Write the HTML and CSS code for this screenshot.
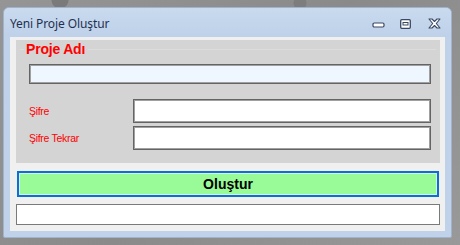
FILE: index.html
```html
<!DOCTYPE html>
<html lang="tr">
<head>
<meta charset="utf-8">
<title>Yeni Proje Oluştur</title>
<link rel="stylesheet" href="styles.css">
</head>
<body>
<div class="desktop">
  <div class="window">
    <div class="titlebar">
      <span class="title">Yeni Proje Oluştur</span>
      <div class="controls">
        <svg class="ctl ctl-min" width="13" height="6" viewBox="0 0 13 6"><rect x="1" y="1" width="11" height="4" rx="1.2" fill="#fff" stroke="#3b4863" stroke-width="1.2"/></svg>
        <svg class="ctl ctl-max" width="11" height="10" viewBox="0 0 11 10"><rect x="0.7" y="0.7" width="9.6" height="8.6" rx="1" fill="#fff" stroke="#3b4863" stroke-width="1.3"/><rect x="3" y="3.5" width="5" height="2.5" fill="none" stroke="#3b4863" stroke-width="1"/></svg>
        <svg class="ctl ctl-close" width="13" height="11" viewBox="0 0 13 11"><path d="M1 1 L4 1 L6.5 3.5 L9 1 L12 1 L8.3 5.5 L12 10 L9 10 L6.5 7.5 L4 10 L1 10 L4.7 5.5 Z" fill="#fff" stroke="#3b4863" stroke-width="1.1" stroke-linejoin="round"/></svg>
      </div>
    </div>
    <div class="client">
      <div class="group">
        <div class="legend-row"><span class="legend">Proje Adı</span></div>
        <input class="field field-name" type="text">
        <div class="pw-grid">
          <label class="lbl">Şifre</label>
          <input class="field" type="password">
          <label class="lbl">Şifre Tekrar</label>
          <input class="field" type="password">
        </div>
      </div>
      <button class="create">Oluştur</button>
      <input class="status" type="text">
    </div>
  </div>
</div>
</body>
</html>
```
FILE: styles.css
```css
html, body {
  margin: 0;
  padding: 0;
}
body {
  width: 460px;
  height: 245px;
  overflow: hidden;
  background: #8f8f8f;
}
.desktop {
  width: 460px;
  height: 245px;
  padding: 7px 0 0 3px;
  box-sizing: border-box;
  background:
    radial-gradient(circle at 60px 0px, #7a7a7a 0 8px, transparent 9px),
    radial-gradient(circle at 300px 3px, #7d7d7d 0 6px, transparent 7px),
    linear-gradient(135deg, #959595, #8a8a8a 50%, #999 100%);
}
.window {
  width: 449px;
  height: 231px;
  box-sizing: border-box;
  border: 1px solid #9fb3cc;
  border-radius: 6px 6px 2px 2px;
  background: #bfd2ea;
  display: flex;
  flex-direction: column;
  padding: 0 6px 6px 6px;
}
.titlebar {
  height: 29px;
  display: flex;
  align-items: center;
  justify-content: space-between;
  background: linear-gradient(#c9daee, #bed1e9);
  margin: 0 -6px;
  padding: 0 10px 0 6px;
  border-radius: 5px 5px 0 0;
}
.title {
  font-family: "Noto Sans", "Open Sans", sans-serif;
  font-size: 12px;
  color: #1f3152;
  margin-top: 1px;
  letter-spacing: -0.1px;
}
.controls {
  display: flex;
  align-items: center;
  gap: 0;
  margin-top: 2px;
}
.ctl { display: block; }
.ctl-min { margin-right: 15px; margin-top: 3px; }
.ctl-max { margin-right: 17px; }
.client {
  flex: 1;
  background: #f0f0f0;
  display: flex;
  flex-direction: column;
  padding: 3px 5px 6px 6px;
}
.group {
  height: 123px;
  box-sizing: border-box;
  background: #d4d4d4;
  padding: 0 9px 0 13px;
  display: flex;
  flex-direction: column;
  position: relative;
}
.group::before {
  content: "";
  position: absolute;
  left: 4px;
  right: 4px;
  top: 9px;
  height: 1px;
  background: #dcdcdc;
}
.legend-row {
  height: 24px;
  position: relative;
}
.legend {
  position: absolute;
  left: -5px;
  top: 1px;
  padding: 0 3px 0 2px;
  background: #d4d4d4;
  font-family: "Liberation Sans", Arial, sans-serif;
  font-weight: bold;
  font-size: 14px;
  line-height: 16px;
  color: #ff0000;
  letter-spacing: -0.2px;
}
.field {
  display: block;
  box-sizing: border-box;
  margin: 0;
  height: 24px;
  border: 1px solid #646464;
  box-shadow: inset 0 0 0 1px #a0a0a0;
  background: #fff;
  outline: none;
  padding: 0;
  width: 100%;
}
.field-name {
  height: 20px;
  background: #eef6ff;
}
.pw-grid {
  margin-top: 15px;
  display: grid;
  grid-template-columns: 104px 1fr;
  row-gap: 3px;
  align-items: center;
}
.lbl {
  font-family: "Liberation Sans", Arial, sans-serif;
  font-size: 10.5px;
  color: #ff0000;
  letter-spacing: -0.3px;
  padding-bottom: 1px;
}
.create {
  margin: 8px 1px 0 1px;
  height: 26px;
  box-sizing: border-box;
  border: 2px solid #0a6fd6;
  box-shadow: inset 0 0 0 1px #d8f0d8;
  background: #98fb98;
  font-family: "Liberation Sans", Arial, sans-serif;
  font-weight: bold;
  font-size: 14px;
  color: #000;
  padding: 0;
}
.status {
  margin: 7px 0 0 0;
  height: 21px;
  box-sizing: border-box;
  border: 1px solid #7a7a7a;
  background: #fff;
  padding: 0;
  outline: none;
}
```
